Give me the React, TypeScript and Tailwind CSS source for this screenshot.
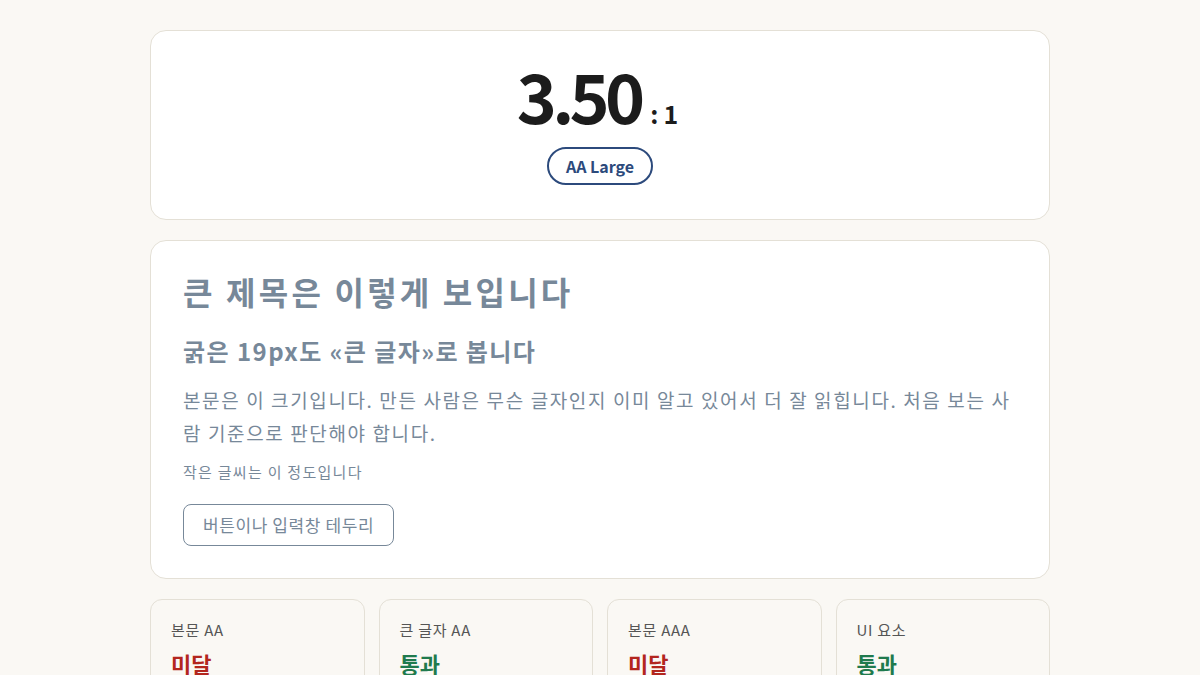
import React from "react";

const checks = [
  { label: "본문 AA", pass: false },
  { label: "큰 글자 AA", pass: true },
  { label: "본문 AAA", pass: false },
  { label: "UI 요소", pass: true },
];

export default function App(): React.JSX.Element {
  const fg = "text-[#778899]";

  return (
    <div
      className="min-h-screen bg-[#faf8f4] pt-[30px] pb-10"
      style={{ fontFamily: '"Noto Sans CJK KR", "Noto Sans", sans-serif' }}
    >
      <div className="w-[900px] mx-auto flex flex-col gap-5">
        {/* ratio */}
        <section className="bg-white border border-[#e4e0d6] rounded-2xl h-[190px] flex flex-col items-center justify-center">
          <div className="flex items-baseline text-[#1c1c1c] -mt-1">
            <span className="text-[68px] font-bold leading-none tracking-[-0.07em]">3.50</span>
            <span className="text-[25px] font-semibold ml-[10px] tracking-[0.2em]">:1</span>
          </div>
          <span className="mt-[15px] px-[17px] h-[38px] flex items-center rounded-full border-2 border-[#2c4a7c] text-[#2c4a7c] text-[16px] font-bold">
            AA Large
          </span>
        </section>

        {/* preview */}
        <section className="bg-white border border-[#e4e0d6] rounded-2xl px-8 pt-[30px] pb-8">
          <h1 className={`text-[32px] font-bold leading-tight tracking-[0.1em] ${fg}`}>
            큰 제목은 이렇게 보입니다
          </h1>
          <h2 className={`mt-[25px] text-[24px] font-bold leading-tight tracking-[0.06em] ${fg}`}>
            굵은 19px도 «큰 글자»로 봅니다
          </h2>
          <p className={`mt-[17px] text-[19px] leading-[33px] tracking-[0.085em] ${fg}`}>
            본문은 이 크기입니다. 만든 사람은 무슨 글자인지 이미 알고 있어서 더 잘 읽힙니다. 처음 보는 사람 기준으로 판단해야 합니다.
          </p>
          <p className={`mt-[12px] text-[15px] tracking-[0.085em] ${fg}`}>작은 글씨는 이 정도입니다</p>
          <button className={`mt-[20px] h-[42px] px-[19px] rounded-lg border-[1.5px] border-[#778899] text-[17px] tracking-[0.035em] ${fg}`}>
            버튼이나 입력창 테두리
          </button>
        </section>

        {/* checks */}
        <div className="grid grid-cols-4 gap-[14px]">
          {checks.map((c) => (
            <div
              key={c.label}
              className="border border-[#e4e0d6] rounded-xl bg-[#faf8f4] px-5 pt-[19px] pb-5"
            >
              <div className="text-[15px] tracking-[0.05em] text-[#555555]">{c.label}</div>
              <div
                className={`mt-[6px] text-[22px] font-bold ${c.pass ? "text-[#1f7a4d]" : "text-[#b3261e]"}`}
              >
                {c.pass ? "통과" : "미달"}
              </div>
            </div>
          ))}
        </div>
      </div>
    </div>
  );
}
